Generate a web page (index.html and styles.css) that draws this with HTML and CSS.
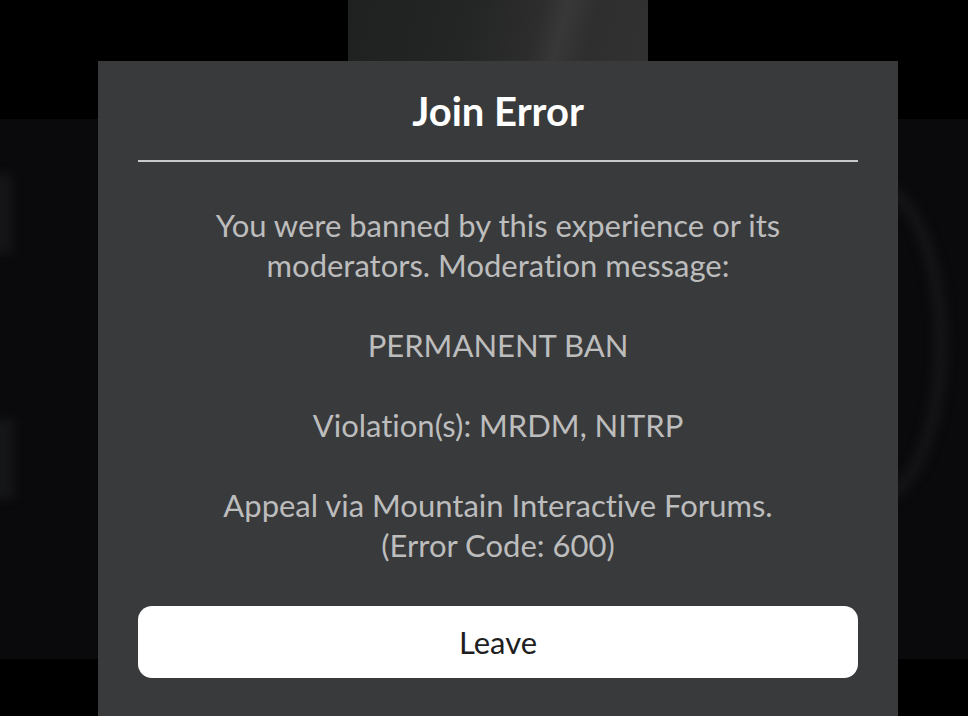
FILE: index.html
```html
<!DOCTYPE html>
<html>
<head>
<meta charset="utf-8">
<link rel="stylesheet" href="styles.css">
</head>
<body>
<div class="backdrop">
  <div class="top"><div class="thumb"></div></div>
  <div class="band">
    <span class="ghost g1"></span>
    <span class="ghost g2"></span>
    <span class="ghost g3"></span>
  </div>
</div>
<div class="dialog">
  <div class="title">Join Error</div>
  <div class="rule"></div>
  <div class="message">
    <p>You were banned by this experience or its<br>moderators. Moderation message:</p>
    <p>PERMANENT BAN</p>
    <p>Violation(s): MRDM, NITRP</p>
    <p>Appeal via Mountain Interactive Forums.<br>(Error Code: 600)</p>
  </div>
  <button class="leave">Leave</button>
</div>
</body>
</html>
```
FILE: styles.css
```css
html, body {
  margin: 0;
  padding: 0;
  background: #000;
  width: 968px;
  height: 716px;
  overflow: hidden;
}
.backdrop {
  display: flex;
  flex-direction: column;
  height: 716px;
}
.top {
  height: 119px;
  display: flex;
  padding-left: 348px;
}
.thumb {
  width: 300px;
  height: 61px;
  background: linear-gradient(105deg, #1f2020 0%, #242525 40%, #2d2d2d 62%, #383838 70%, #2e2e2e 80%, #323232 100%);
}
.band {
  height: 540px;
  background: #0a0a0c;
  position: relative;
  overflow: hidden;
}
.ghost {
  position: absolute;
  filter: blur(5px);
}
.g1 { left: -10px; top: 55px; width: 22px; height: 80px; background: #151517; }
.g2 { left: -10px; top: 300px; width: 24px; height: 80px; background: #151618; }
.g3 { left: 800px; top: 60px; width: 120px; height: 300px; border: 14px solid #141416; border-radius: 50%; }
.dialog {
  position: absolute;
  left: 98px;
  top: 61px;
  width: 720px;
  bottom: 0;
  background: #393a3c;
  padding: 0 40px;
  display: flex;
  flex-direction: column;
  font-family: "Lato", "Noto Sans", sans-serif;
  font-variant-ligatures: none;
}
.title {
  height: 99px;
  display: flex;
  align-items: center;
  justify-content: center;
  color: #fff;
  font-weight: 700;
  font-size: 40px;
}
.rule {
  height: 2px;
  background: #c9c9c9;
}
.message {
  margin-top: 43px;
  color: #bdbdbd;
  font-size: 31px;
  line-height: 40px;
  text-align: center;
}
.message p {
  margin: 0 0 40px;
}
.message p:last-child {
  margin-bottom: 0;
}
.leave {
  margin-top: 41px;
  height: 72px;
  border: none;
  border-radius: 14px;
  background: #fff;
  color: #1e1e1e;
  font-family: inherit;
  font-variant-ligatures: none;
  font-size: 31px;
  padding: 0;
}
```
